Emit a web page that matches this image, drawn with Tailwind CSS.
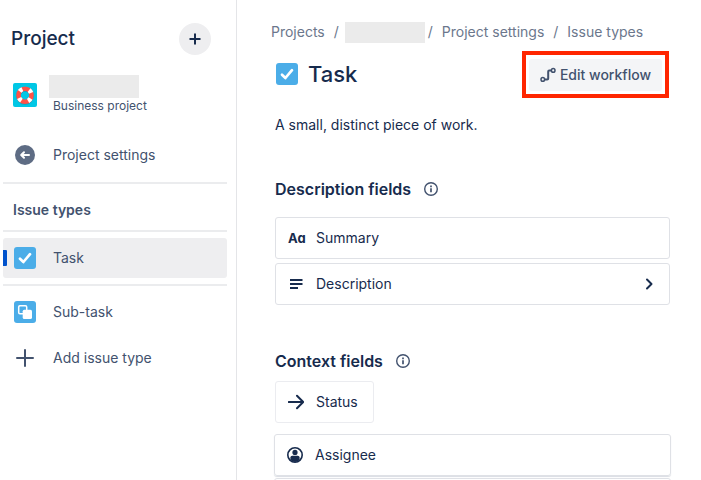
<!DOCTYPE html>
<html lang="en">

<head>
    <meta charset="UTF-8">
    <meta name="viewport" content="width=device-width, initial-scale=1.0">
    <title>Issue types - Task</title>
    <script src="https://cdn.jsdelivr.net/npm/@tailwindcss/browser@4"></script>
</head>

<body class="bg-white font-['Inter','Liberation_Sans',sans-serif] text-sm text-[#172b4d]">
    <div class="flex h-screen overflow-hidden">
        <!-- Sidebar -->
        <aside class="w-[237px] shrink-0 border-r border-[#e4e5e8] pt-[23px] pr-[9px] pl-[3px] text-[#42526e]">
            <div class="flex h-8 items-center justify-between pr-4 pl-2">
                <h2 class="text-[19px] font-medium text-[#172b4d]">Project</h2>
                <button type="button" aria-label="Create"
                    class="flex size-8 items-center justify-center rounded-full bg-[#eeeef0] text-[#172b4d]">
                    <svg class="size-3" viewBox="0 0 12 12" fill="none" stroke="currentColor" stroke-width="2">
                        <path d="M6 0.5v11M0.5 6h11" />
                    </svg>
                </button>
            </div>

            <div class="mt-5 flex items-center pl-[10px]">
                <svg class="size-6" viewBox="0 0 24 24" fill="none">
                    <rect width="24" height="24" rx="2" fill="#00c7e5" />
                    <circle cx="12" cy="13" r="6.5" stroke="#0b9fc0" stroke-width="4.6" />
                    <circle cx="12" cy="12.2" r="6.5" stroke="#ff5247" stroke-width="4.6" />
                    <circle cx="12" cy="12.2" r="6.5" stroke="#fff" stroke-width="4.6" stroke-dasharray="3.2 7.01"
                        stroke-dashoffset="-3.505" />
                </svg>
                <div class="ml-3">
                    <div class="h-[23px] w-[90px] bg-[#ebebeb]"></div>
                    <p class="pl-1 text-xs">Business project</p>
                </div>
            </div>

            <nav class="mt-[21px]">
                <a href="#" class="flex h-10 items-center gap-[18px] pl-3">
                    <svg class="size-5" viewBox="0 0 20 20" fill="none">
                        <circle cx="10" cy="10" r="10" fill="#5e6c84" />
                        <path d="M14 10H6.5M9 7.2L6.2 10L9 12.8" stroke="#fff" stroke-width="2" stroke-linecap="round"
                            stroke-linejoin="round" />
                    </svg>
                    Project settings
                </a>
                <hr class="mt-[7px] border-t-2 border-[#ebecee]">
                <h3 class="flex h-[46px] items-center pt-[6px] pl-[10px] font-semibold">Issue types</h3>
                <hr class="border-t-2 border-[#ebecee]">
                <a href="#" class="relative my-[6px] flex h-10 items-center gap-[17px] rounded-[3px] bg-[#eeeef0] pl-[11px]">
                    <span class="absolute left-0 h-4 w-1 rounded-r-[1px] bg-[#0052cc]"></span>
                    <svg class="size-[22px]" viewBox="0 0 22 22" fill="none">
                        <rect width="22" height="22" rx="3" fill="#4bade8" />
                        <path d="M6 11.8L9.4 15L16 7.2" stroke="#fff" stroke-width="2.7" stroke-linecap="round"
                            stroke-linejoin="round" />
                    </svg>
                    Task
                </a>
                <hr class="border-t-2 border-[#ebecee]">
                <a href="#" class="mt-[6px] flex h-10 items-center gap-[17px] pl-[11px]">
                    <svg class="size-[22px]" viewBox="0 0 22 22" fill="none">
                        <rect width="22" height="22" rx="3" fill="#4bade8" />
                        <rect x="4.7" y="4.7" width="8" height="8" rx="1.2" stroke="#fff" stroke-width="1.5" />
                        <rect x="8.7" y="8.7" width="9.3" height="9.3" rx="1.6" fill="#fff" />
                    </svg>
                    Sub-task
                </a>
                <a href="#" class="mt-[6px] flex h-10 items-center gap-[19px] pl-[13px]">
                    <svg class="size-[18px]" viewBox="0 0 18 18" fill="none" stroke="currentColor" stroke-width="2"
                        stroke-linecap="round">
                        <path d="M9 1v16M1 9h16" />
                    </svg>
                    Add issue type
                </a>
            </nav>
        </aside>

        <!-- Issue type details -->
        <main class="min-w-0 grow pt-5 pr-[31px] pl-[38px]">
            <nav aria-label="Breadcrumb" class="-ml-1 flex items-center whitespace-nowrap text-[#6b778c]">
                <a href="#">Projects</a>
                <span class="pr-[6px] pl-[9px]">/</span>
                <span class="mt-[2px] h-[21px] w-20 bg-[#ebebeb]"></span>
                <span class="pr-[9px] pl-[3px]">/</span>
                <a href="#">Project settings</a>
                <span class="px-[9px]">/</span>
                <a href="#">Issue types</a>
            </nav>

            <div class="mt-2 flex items-center justify-between px-px">
                <div class="flex items-center gap-[10px]">
                    <svg class="size-[22px]" viewBox="0 0 22 22" fill="none">
                        <rect width="22" height="22" rx="3" fill="#4bade8" />
                        <path d="M6 11.8L9.4 15L16 7.2" stroke="#fff" stroke-width="2.7" stroke-linecap="round"
                            stroke-linejoin="round" />
                    </svg>
                    <h1 class="text-[22px] font-medium">Task</h1>
                </div>
                <div class="border-4 border-[#ff2600] px-[3px] pt-1 pb-[3px]">
                    <button type="button"
                        class="flex h-8 items-center gap-1 rounded-[3px] bg-[#f4f5f7] px-[11px] font-medium whitespace-nowrap text-[#42526e]">
                        <svg class="size-4" viewBox="0 0 16 16" fill="none" stroke="currentColor" stroke-width="1.5">
                            <circle cx="2.8" cy="12.4" r="1.8" />
                            <circle cx="13.2" cy="3.4" r="1.8" />
                            <path d="M4.6 12.4H7.2Q8.2 12.4 8.2 11.4V4.4Q8.2 3.4 9.2 3.4H11.4" stroke-width="2" />
                        </svg>
                        Edit workflow
                    </button>
                </div>
            </div>

            <p class="mt-[17px]">A small, distinct piece of work.</p>

            <section class="mt-[42px]">
                <div class="flex items-center gap-3">
                    <h2 class="text-base font-semibold">Description fields</h2>
                    <svg class="size-4" viewBox="0 0 16 16" fill="none" stroke="#42526e">
                        <circle cx="8" cy="8" r="6.3" stroke-width="1.4" />
                        <path d="M8 7.2v4M8 4.6v1.6" stroke-width="1.7" />
                    </svg>
                </div>
                <ul class="mt-4 flex flex-col gap-1">
                    <li class="flex h-[42px] items-center rounded-[3px] border border-[#dfe1e6] px-3">
                        <span class="w-7 text-[13px] font-bold [font-feature-settings:'cv11']">Aa</span>
                        Summary
                    </li>
                    <li class="flex h-[42px] items-center gap-3 rounded-[3px] border border-[#dfe1e6] px-3">
                        <svg class="size-4" viewBox="0 0 16 16" fill="none" stroke="currentColor" stroke-width="2">
                            <path d="M2 4h12.5M2 8h12.5M2 12h8" />
                        </svg>
                        <span class="grow">Description</span>
                        <button type="button" aria-label="Expand Description">
                            <svg class="size-4" viewBox="0 0 16 16" fill="none" stroke="currentColor" stroke-width="2"
                                stroke-linecap="round" stroke-linejoin="round">
                                <path d="M6 3.5L10.5 8L6 12.5" />
                            </svg>
                        </button>
                    </li>
                </ul>
            </section>

            <section class="mt-11">
                <div class="flex items-center gap-3">
                    <h2 class="text-base font-semibold">Context fields</h2>
                    <svg class="size-4" viewBox="0 0 16 16" fill="none" stroke="#42526e">
                        <circle cx="8" cy="8" r="6.3" stroke-width="1.4" />
                        <path d="M8 7.2v4M8 4.6v1.6" stroke-width="1.7" />
                    </svg>
                </div>
                <div class="mt-2 flex h-[42px] w-[99px] items-center gap-3 rounded-[3px] border border-[#ebecf0] px-3">
                    <svg class="size-4 shrink-0" viewBox="0 0 16 16" fill="none" stroke="currentColor" stroke-width="2"
                        stroke-linecap="round" stroke-linejoin="round">
                        <path d="M0.8 8H15M9 1.8L15.2 8L9 14.2" />
                    </svg>
                    Status
                </div>
                <ul class="-mx-px mt-[11px] flex flex-col gap-[2px]">
                    <li class="flex h-[42px] items-center gap-3 rounded-[3px] border border-[#dfe1e6] px-3 shadow-[0_1px_1px_#091e4226]">
                        <svg class="size-4" viewBox="0 0 16 16" fill="currentColor">
                            <circle cx="8" cy="8" r="7.2" fill="none" stroke="currentColor" stroke-width="1.6" />
                            <circle cx="8" cy="5.4" r="2.6" />
                            <path d="M3.4 13V10.6Q3.4 8.8 5.2 8.8H10.8Q12.6 8.8 12.6 10.6V13Q8 17 3.4 13z" />
                        </svg>
                        Assignee
                    </li>
                    <li class="h-[42px] rounded-[3px] border border-[#dfe1e6]"></li>
                </ul>
            </section>
        </main>
    </div>
</body>

</html>
